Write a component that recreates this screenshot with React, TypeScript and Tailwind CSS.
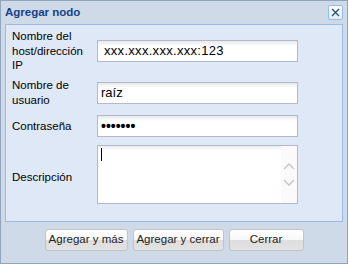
const inputBase =
  "flex h-[22px] w-[201px] items-center border border-[#b5b8c8] bg-[linear-gradient(#e6e8ec,#ffffff_5px)] text-[13px] text-black";

const FieldLabel = ({ children }: { children: React.ReactNode }) => (
  <div className="w-[85px] shrink-0 text-[11.5px] leading-[14.5px] text-black">{children}</div>
);

const Button = ({ label, width }: { label: string; width: string }) => (
  <button
    type="button"
    className={`h-[22px] ${width} rounded-[3px] border border-[#c3c3c3] bg-[linear-gradient(#ffffff_0%,#f7f7f7_48%,#dedede_52%,#e2e2e2_100%)] text-[11.5px] text-[#222]`}
  >
    {label}
  </button>
);

export default function App() {
  return (
    <div className="h-[264px] w-[349px] bg-white font-['Liberation_Sans',Arial,sans-serif]">
      <div className="flex h-[264px] w-[348px] flex-col border border-[#90a4be] bg-[#cedae7]">
        <div className="flex h-[23px] items-center justify-between px-[4px]">
          <span className="text-[11.5px] font-bold text-[#15428b]">Agregar nodo</span>
          <div className="flex h-[15px] w-[15px] items-center justify-center rounded-[2px] border border-[#99bbe8] bg-[linear-gradient(#ffffff,#e4ecf7)]">
            <svg width="9" height="9" viewBox="0 0 9 9" fill="none">
              <path d="M1 1L8 8M8 1L1 8" stroke="#2f4f86" strokeWidth="1.4" />
            </svg>
          </div>
        </div>

        <div className="mx-[4px] flex h-[198px] flex-col border border-[#99bbe8] bg-[#dfe8f6] pl-[6px] pt-[4px]">
          <div className="flex h-[44px] items-center">
            <FieldLabel>
              Nombre del
              <br />
              host/dirección
              <br />
              IP
            </FieldLabel>
            <div className={inputBase}>
              <span className="pl-[6px] tracking-[0.3px]">xxx.xxx.xxx.xxx:123</span>
            </div>
          </div>

          <div className="mt-[5px] flex h-[29px] items-center">
            <FieldLabel>
              Nombre de
              <br />
              usuario
            </FieldLabel>
            <div className={inputBase}>
              <span className="pl-[3px]">raíz</span>
            </div>
          </div>

          <div className="mt-[8px] flex h-[22px] items-center">
            <FieldLabel>Contraseña</FieldLabel>
            <div className={inputBase}>
              <span className="pl-[3px] text-[14px] font-bold leading-none">•••••••</span>
            </div>
          </div>

          <div className="mt-[8px] flex h-[59px] items-center">
            <FieldLabel>
              <span className="relative top-[3px]">Descripción</span>
            </FieldLabel>
            <div className="flex h-[59px] w-[201px] border border-[#b5b8c8] bg-[linear-gradient(#eceef1,#ffffff_5px)]">
              <div className="flex-1 pl-[3px] pt-[2px]">
                <div className="h-[13px] w-px bg-black" />
              </div>
              <div className="flex w-[16px] flex-col items-center justify-center gap-[9px] bg-[#fbf9fc]">
                <svg width="12" height="7" viewBox="0 0 12 7" fill="none">
                  <path d="M1 6L6 1L11 6" stroke="#c4c4c4" strokeWidth="1.3" />
                </svg>
                <svg width="12" height="7" viewBox="0 0 12 7" fill="none">
                  <path d="M1 1L6 6L11 1" stroke="#c4c4c4" strokeWidth="1.3" />
                </svg>
              </div>
            </div>
          </div>
        </div>

        <div className="flex flex-1 justify-center gap-[5px] pt-[7px]">
          <Button label="Agregar y más" width="w-[83px]" />
          <Button label="Agregar y cerrar" width="w-[91px]" />
          <Button label="Cerrar" width="w-[75px]" />
        </div>
      </div>
    </div>
  );
}
